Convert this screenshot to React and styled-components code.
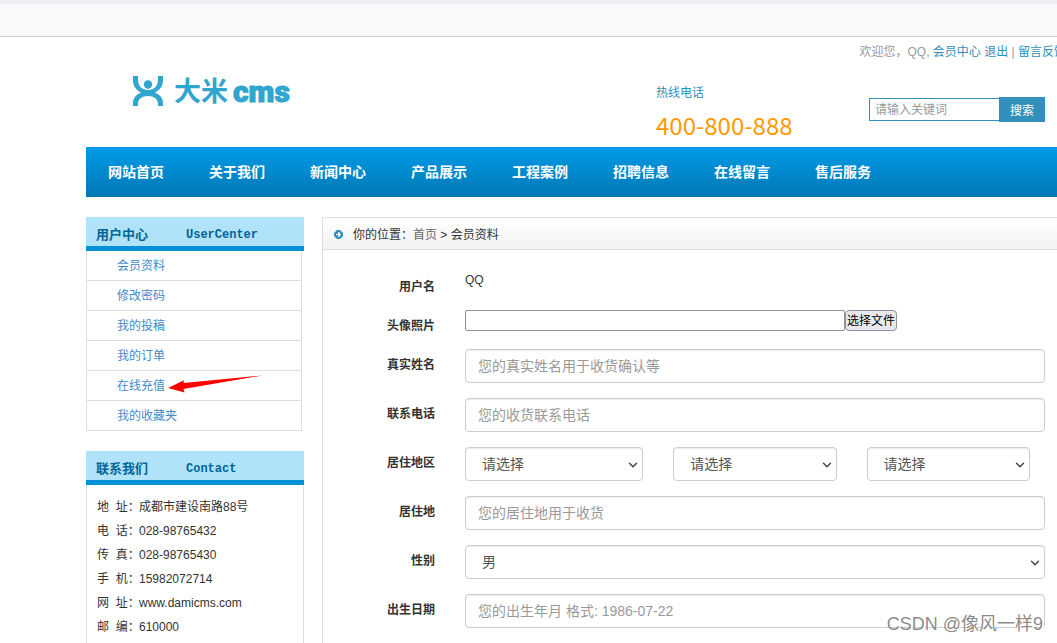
import React from 'react';
import styled, { createGlobalStyle } from 'styled-components';
import { ChevronDown } from 'lucide-react';

const GlobalStyle = createGlobalStyle`
  * {
    box-sizing: border-box;
  }

  body {
    margin: 0;
    color: #333;
    background: #fff;
    font: 12px/18px "Liberation Sans", "Noto Sans CJK SC", sans-serif;
  }

  ul, dl, dd, h1, h2, p {
    margin: 0;
    padding: 0;
  }

  ul {
    list-style: none;
  }

  a {
    color: inherit;
    text-decoration: none;
  }

  input, select, button {
    margin: 0;
    font-family: inherit;
  }
`;

const Page = styled.div`
  min-height: 100vh;
  display: flex;
  flex-direction: column;
  position: relative;
  overflow: clip;
`;

const TopBar = styled.div`
  height: 37px;
  border-top: 4px solid #f0f0f4;
  border-bottom: 1px solid #ccc;
  background: #f9f9fb;
`;

/* 内容比窗口略宽 */
const Container = styled.div`
  flex: 1;
  display: flex;
  flex-direction: column;
  margin-left: 86px;
  margin-right: -9px;
`;

const Header = styled.header`
  height: 110px;
  display: grid;
  grid-template-columns: 570px 1fr auto;
  grid-template-rows: 42px 1fr;
`;

const UserLinks = styled.div`
  grid-column: 1 / -1;
  padding-top: 6px;
  text-align: right;
  color: #999;
  white-space: pre;

  a {
    color: #2e8fba;
  }
`;

const Logo = styled.h1`
  display: flex;
  align-items: center;
  height: 30px;
  margin: -3px 0 0 47px;
  color: #2fa5cf;
  line-height: 30px;
`;

const LogoMark = styled.svg`
  width: 30px;
  height: 30px;
  margin-right: 11px;
`;

const LogoCn = styled.span`
  padding-top: 2px;
  margin-right: 5px;
  font-size: 27px;
  font-weight: 700;
`;

const LogoEn = styled.span`
  padding-top: 2px;
  font-family: Roboto, sans-serif;
  font-size: 30px;
  font-weight: 900;
  -webkit-text-stroke: 1px currentColor;
`;

const Hotline = styled.div`
  padding-top: 5px;
  color: #2e8fba;
`;

const HotlineNumber = styled.p`
  color: #f90;
  font-family: "Noto Sans CJK SC", sans-serif;
  font-size: 24px;
  line-height: 46px;
`;

const Search = styled.form`
  display: flex;
  align-items: center;
  height: 25px;
  margin: 18px 21px 0 0;
`;

const SearchInput = styled.input`
  width: 130px;
  height: 23px;
  padding: 0 5px;
  border: 1px solid #3291ba;
  border-right: 0;
  font-size: 12px;
  outline: 0;

  &::placeholder {
    color: #999;
  }
`;

const SearchButton = styled.button`
  width: 46px;
  height: 25px;
  padding: 0;
  border: 0;
  background: #3291ba;
  color: #fff;
  font-size: 12px;
`;

const Nav = styled.nav`
  height: 50px;
  display: flex;
  gap: 1px;
  background: linear-gradient(#009be8, #0078b4);
`;

const NavLink = styled.a`
  padding: 0 22px;
  color: #fff;
  font-size: 14px;
  font-weight: 700;
  line-height: 50px;
`;

const Body = styled.div`
  flex: 1;
  display: flex;
  gap: 18px;
  padding-top: 20px;
`;

const Sidebar = styled.aside`
  width: 218px;
  flex-shrink: 0;
  display: flex;
  flex-direction: column;
`;

const SideTitle = styled.h2`
  display: flex;
  height: 34px;
  padding: 2px 10px 0;
  border-bottom: 5px solid #0090d7;
  background: #b0e2f9;
  color: #006597;
  font-size: 13px;
  line-height: 32px;

  span {
    width: 90px;
  }

  small {
    font-family: "Liberation Mono", monospace;
    font-size: 12px;
  }
`;

const Menu = styled.ul`
  width: 216px;
  margin-bottom: 20px;
  border: 1px solid #ddd;
  border-width: 0 1px;
`;

const MenuItem = styled.li`
  position: relative;
  height: 30px;
  padding-left: 30px;
  border-bottom: 1px solid #ddd;
  color: #428bca;
  line-height: 31px;
`;

const Pointer = styled.svg`
  position: absolute;
  left: 80px;
  top: 4px;
  width: 96px;
  height: 18px;
`;

const Contact = styled.dl`
  flex: 1;
  padding: 10px 10px 0;
  border: 1px solid #ddd;
  border-width: 0 1px;
  line-height: 24px;

  div {
    display: flex;
  }

  dt {
    width: 42px;
    white-space: pre;
  }
`;

const Panel = styled.main`
  flex: 1;
  border: 1px solid #ddd;
  border-bottom: 0;
`;

const Breadcrumb = styled.div`
  height: 32px;
  display: flex;
  align-items: center;
  padding: 2px 11px 0;
  border-bottom: 1px solid #ddd;
  background: linear-gradient(#fff, #f2f2f2);
  white-space: pre;

  svg {
    margin-right: 10px;
  }

  a {
    color: #666;
  }
`;

const Form = styled.form`
  display: flex;
  flex-direction: column;
  gap: 15px;
  padding: 21px 20px 0 0;
`;

const Row = styled.div`
  display: grid;
  grid-template-columns: 112px 1fr;
  column-gap: 30px;
  min-height: 24px;
`;

const Label = styled.label`
  height: 24px;
  padding-top: 7px;
  font-weight: 700;
  text-align: right;
`;

const control = `
  display: block;
  width: 100%;
  height: 34px;
  border: 1px solid #ccc;
  border-radius: 4px;
  background: #fff;
  box-shadow: inset 0 1px 1px rgba(0, 0, 0, 0.075);
  color: #555;
  font-size: 14px;
  outline: 0;
`;

const TextInput = styled.input`
  ${control}
  padding: 0 12px;

  &::placeholder {
    color: #999;
  }
`;

const SelectWrap = styled.div`
  position: relative;

  svg {
    position: absolute;
    right: 3px;
    top: 11px;
    color: #444;
    pointer-events: none;
  }
`;

const SelectInput = styled.select`
  ${control}
  padding: 0 16px;
  appearance: none;
`;

const Regions = styled.div`
  display: grid;
  grid-template-columns: 12fr 11fr 11fr;
  gap: 30px;
  padding-right: 15px;
`;

const FilePicker = styled.div`
  display: flex;
  height: 21px;
`;

const FileInput = styled.input`
  width: 380px;
  border: 1px solid #8f8f9d;
  border-radius: 2px;
  outline: 0;
`;

const FileButton = styled.button`
  width: 52px;
  padding: 0;
  border: 1px solid #8f8f9d;
  border-radius: 4px;
  background: #e9e9ed;
  color: #000;
  font-size: 12px;
  line-height: 18px;
`;

const Watermark = styled.div`
  position: absolute;
  right: 14px;
  bottom: 6px;
  color: rgba(100, 100, 100, 0.75);
  font-size: 18px;
  line-height: 26px;
  text-shadow: 1px 1px 0 #fff;
`;

const navItems = ['网站首页', '关于我们', '新闻中心', '产品展示', '工程案例', '招聘信息', '在线留言', '售后服务'];

const menuItems = ['会员资料', '修改密码', '我的投稿', '我的订单', '在线充值', '我的收藏夹'];

const contacts = [
  ['地  址：', '成都市建设南路88号'],
  ['电  话：', '028-98765432'],
  ['传  真：', '028-98765430'],
  ['手  机：', '15982072714'],
  ['网  址：', 'www.damicms.com'],
  ['邮  编：', '610000'],
];

function Select({ option, ...props }) {
  return (
    <SelectWrap>
      <SelectInput {...props}>
        <option>{option}</option>
      </SelectInput>
      <ChevronDown size={14} strokeWidth={2.5} />
    </SelectWrap>
  );
}

function TextRow({ id, label, placeholder }) {
  return (
    <Row>
      <Label htmlFor={id}>{label}</Label>
      <TextInput id={id} type='text' placeholder={placeholder} />
    </Row>
  );
}

function App() {
  return (
    <Page>
      <GlobalStyle />
      <TopBar />
      <Container>
        <Header>
          <UserLinks>
            欢迎您，QQ, <a href='#member'>会员中心</a> <a href='#logout'>退出</a> | <a href='#feedback'>留言反馈</a>
          </UserLinks>
          <Logo>
            <LogoMark viewBox='0 0 30 30' fill='currentColor'>
              <path d='M0 0H5V4C5 10 9 14 15 14S25 10 25 4V0H30V4C30 10 27 14 22 16.500C27 19 30 22 30 27V30H25V28C25 23 21 20 15 20S5 23 5 28V30H0V27C0 22 3 19 8 16.500C3 14 0 10 0 4Z' />
              <circle cx='15' cy='8.500' r='4.200' />
            </LogoMark>
            <LogoCn>大米</LogoCn>
            <LogoEn>cms</LogoEn>
          </Logo>
          <Hotline>
            热线电话
            <HotlineNumber>400-800-888</HotlineNumber>
          </Hotline>
          <Search>
            <SearchInput type='text' placeholder='请输入关键词' aria-label='请输入关键词' />
            <SearchButton type='button'>搜索</SearchButton>
          </Search>
        </Header>

        <Nav>
          {navItems.map((item) => <NavLink key={item} href='#nav'>{item}</NavLink>)}
        </Nav>

        <Body>
          <Sidebar>
            <SideTitle><span>用户中心</span><small>UserCenter</small></SideTitle>
            <Menu>
              {menuItems.map((item) => (
                <MenuItem key={item}>
                  <a href='#menu'>{item}</a>
                  {
                    item === '在线充值' ? (
                      <Pointer viewBox='0 0 96 18'>
                        <path d='M1 13L17 5.300L16.500 8L95 0.500L16.500 14L17.500 17.500Z' fill='#f00' />
                      </Pointer>
                    )
                    : ''
                  }
                </MenuItem>
              ))}
            </Menu>
            <SideTitle><span>联系我们</span><small>Contact</small></SideTitle>
            <Contact>
              {contacts.map(([name, value]) => (
                <div key={name}>
                  <dt>{name}</dt>
                  <dd>{value}</dd>
                </div>
              ))}
            </Contact>
          </Sidebar>

          <Panel>
            <Breadcrumb>
              <svg width='9' height='9' viewBox='0 0 9 9'>
                <path d='M3 0H6L9 3V6L6 9H3L0 6V3Z' fill='#2e8fba' />
                <path d='M2 4H4V2H5L7 4.500L5 7H4V5H2Z' fill='#fff' />
              </svg>
              你的位置：<a href='#home'>首页</a> &gt; 会员资料
            </Breadcrumb>
            <Form>
              <Row>
                <Label as='span'>用户名</Label>
                <span>QQ</span>
              </Row>
              <Row>
                <Label htmlFor='avatar'>头像照片</Label>
                <FilePicker>
                  <FileInput id='avatar' type='text' />
                  <FileButton type='button'>选择文件</FileButton>
                </FilePicker>
              </Row>
              <TextRow id='realname' label='真实姓名' placeholder='您的真实姓名用于收货确认等' />
              <TextRow id='tel' label='联系电话' placeholder='您的收货联系电话' />
              <Row>
                <Label htmlFor='province'>居住地区</Label>
                <Regions>
                  <Select id='province' option='请选择' />
                  <Select aria-label='城市' option='请选择' />
                  <Select aria-label='区县' option='请选择' />
                </Regions>
              </Row>
              <TextRow id='address' label='居住地' placeholder='您的居住地用于收货' />
              <Row>
                <Label htmlFor='sex'>性别</Label>
                <Select id='sex' option='男' />
              </Row>
              <TextRow id='birthday' label='出生日期' placeholder='您的出生年月 格式: 1986-07-22' />
            </Form>
          </Panel>
        </Body>
      </Container>
      <Watermark>CSDN @像风一样9</Watermark>
    </Page>
  );
}

export default App;
